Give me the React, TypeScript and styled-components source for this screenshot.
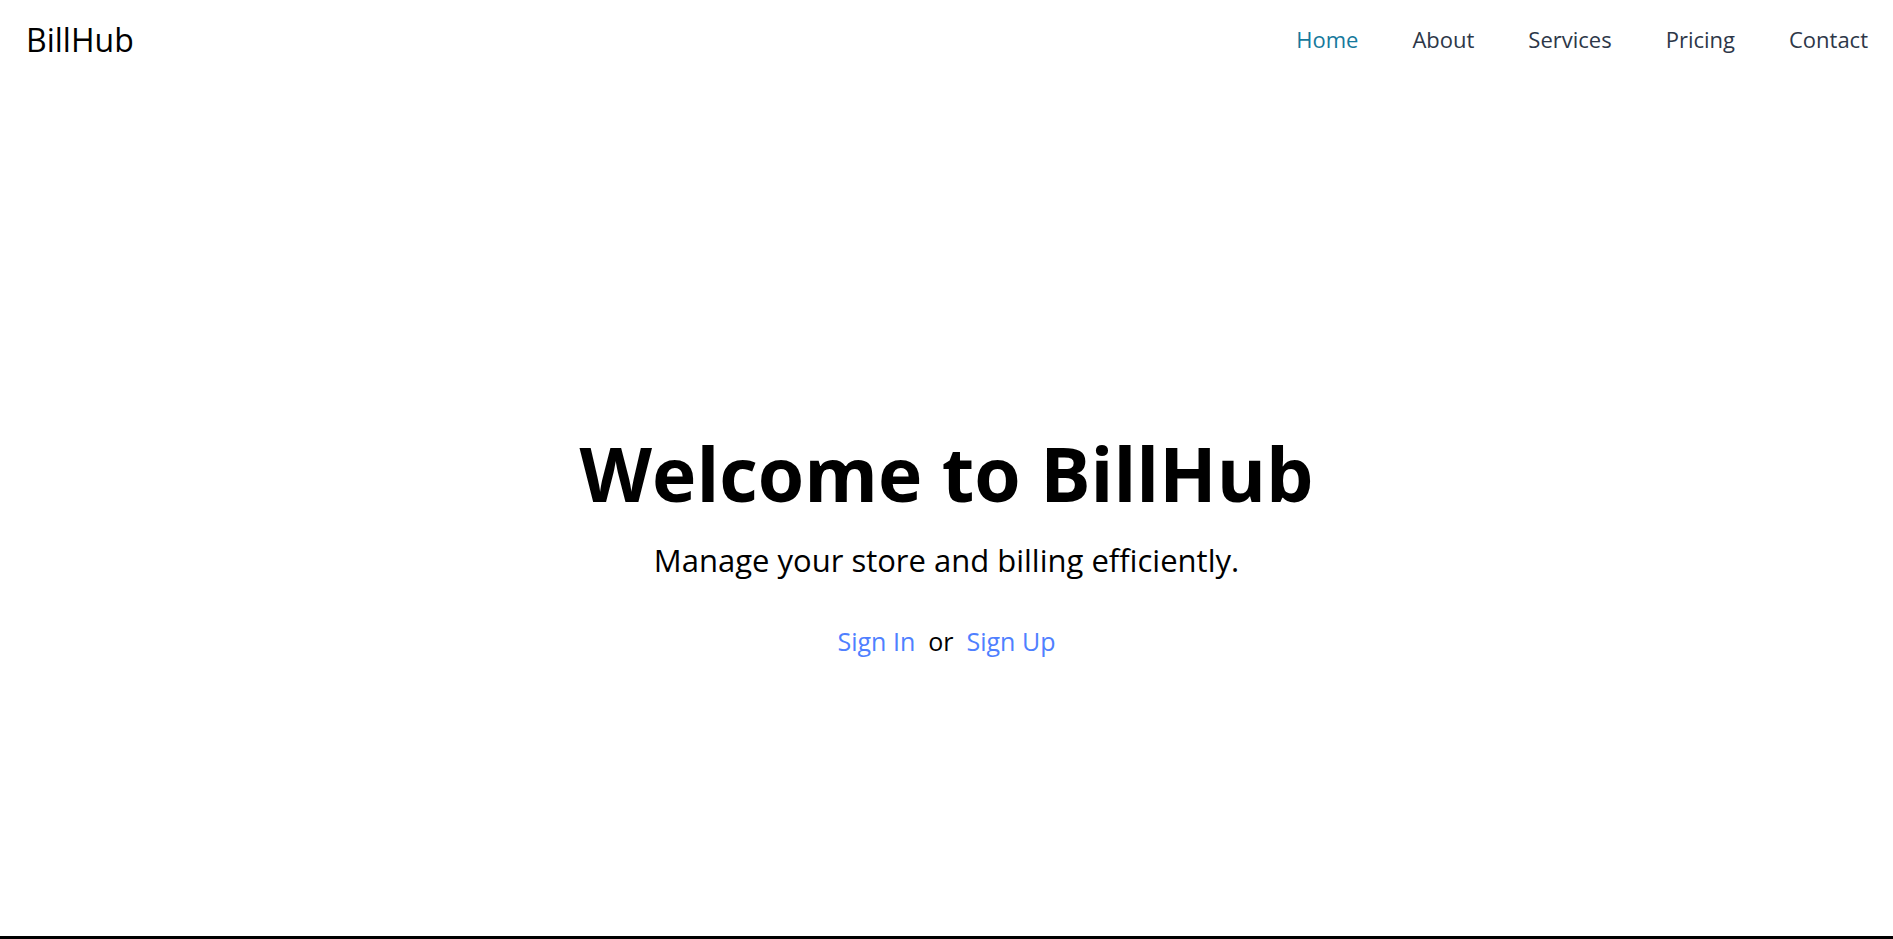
import React from "react";
import styled, { createGlobalStyle } from "styled-components";

const GlobalStyle = createGlobalStyle`
  html, body {
    margin: 0;
    padding: 0;
    background: #ffffff;
  }
  body {
    font-family: "Segoe UI", "Open Sans", "Noto Sans", sans-serif;
    color: #000;
  }
  * {
    box-sizing: border-box;
  }
`;

const navLinks = ["Home", "About", "Services", "Pricing", "Contact"];

const App = () => {
  return (
    <>
      <GlobalStyle />
      <Page>
        <Header>
          <Logo>BillHub</Logo>
          <Nav>
            {navLinks.map((link) => (
              <NavLink key={link} href="#" $active={link === "Home"}>
                {link}
              </NavLink>
            ))}
          </Nav>
        </Header>

        <Hero>
          <Title>Welcome to BillHub</Title>
          <Subtitle>Manage your store and billing efficiently.</Subtitle>
          <AuthRow>
            <AuthLink href="#">Sign In</AuthLink>
            <span>or</span>
            <AuthLink href="#">Sign Up</AuthLink>
          </AuthRow>
        </Hero>

        <Footer />
      </Page>
    </>
  );
};

// --- Styled Components ---

const Page = styled.div`
  min-height: 100vh;
  display: flex;
  flex-direction: column;
`;

const Header = styled.header`
  height: 78px;
  padding: 0 25px 0 26px;
  display: flex;
  justify-content: space-between;
  align-items: center;
`;

const Logo = styled.div`
  font-size: 32px;
  font-weight: 500;
  color: #000;
`;

const Nav = styled.nav`
  display: flex;
  align-items: center;
  gap: 54px;
`;

const NavLink = styled.a<{ $active?: boolean }>`
  font-size: 22px;
  font-weight: 500;
  text-decoration: none;
  color: ${({ $active }) => ($active ? "#16799c" : "#2d3748")};
`;

const Hero = styled.main`
  flex: 1;
  display: flex;
  flex-direction: column;
  align-items: center;
  padding-top: 350px;
`;

const Title = styled.h1`
  margin: 0;
  font-size: 75px;
  font-weight: 700;
  line-height: 1.2;
  color: #000;
`;

const Subtitle = styled.p`
  margin: 22px 0 0;
  font-size: 31px;
  line-height: 1.3;
  color: #000;
`;

const AuthRow = styled.div`
  margin-top: 44px;
  display: flex;
  align-items: baseline;
  gap: 13px;
  font-size: 25px;
  color: #000;
`;

const AuthLink = styled.a`
  color: #4f80ff;
  text-decoration: none;
`;

const Footer = styled.footer`
  height: 3px;
  background: #000;
`;

export default App;
